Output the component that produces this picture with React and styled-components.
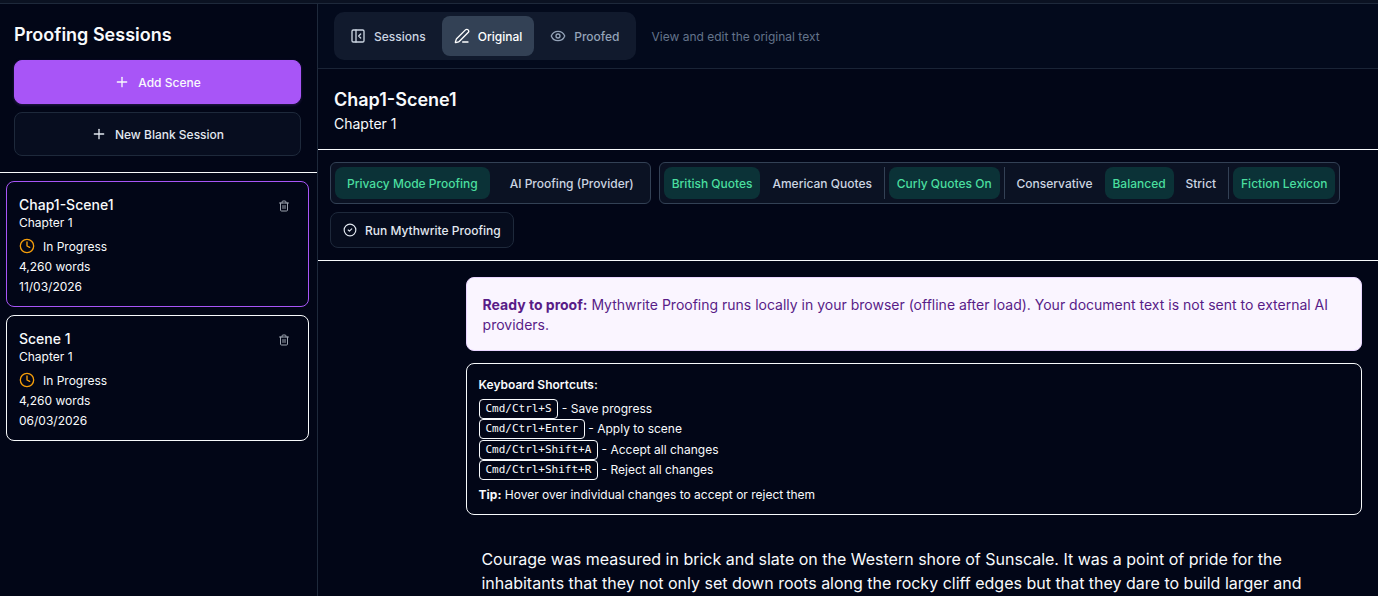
import React, { useState } from 'react';
import styled, { createGlobalStyle, css } from 'styled-components';
import { CircleCheck, Clock, Eye, PanelLeftClose, PenLine, Plus, Trash2 } from 'lucide-react';

const GlobalStyle = createGlobalStyle`
  * { box-sizing: border-box; }
  body {
    margin: 0;
    background: #020617;
    color: #f8fafc;
    font-family: Inter, 'Liberation Sans', sans-serif;
    font-size: 12px;
  }
  button { font-family: inherit; cursor: pointer; }
  h1, h2, h3, p { margin: 0; }
`;

const Page = styled.div`
  display: flex;
  flex-direction: column;
  height: 596px;
  overflow: hidden;
`;

const TopStrip = styled.div`
  flex: none;
  height: 4px;
  background: #0b1222;
  border-bottom: 1px solid #1e293b;
`;

const Body = styled.div`
  display: flex;
  flex: 1;
  min-height: 0;
`;

const Sidebar = styled.aside`
  flex: none;
  width: 318px;
  border-right: 1px solid #1e293b;
`;

const SidebarHead = styled.div`
  display: flex;
  flex-direction: column;
  gap: 8px;
  height: 169px;
  padding: 17px 16px 16px 14px;
  border-bottom: 1px solid #f8fafc;
`;

const SidebarTitle = styled.h2`
  height: 31px;
  font-size: 18px;
  font-weight: 600;
  line-height: 28px;
`;

const SideButton = styled.button`
  display: flex;
  flex: none;
  align-items: center;
  justify-content: center;
  gap: 8px;
  height: 44px;
  padding-top: 2px;
  border: 1px solid #1e293b;
  border-radius: 8px;
  background: #070d1f;
  color: #e2e8f0;
  font-size: 12px;
  font-weight: 500;

  svg { margin-top: -2px; }

  ${({ $primary }) =>
    $primary &&
    css`
      border-color: #a855f7;
      background: #a855f7;
      color: #f8fafc;
      box-shadow: 0 1px 3px rgba(168, 85, 247, 0.25);
    `}
`;

const SessionList = styled.div`
  display: flex;
  flex-direction: column;
  gap: 8px;
  padding: 8px 8px 8px 6px;
`;

const Card = styled.article`
  display: flex;
  justify-content: space-between;
  height: 126px;
  padding: 13px 18px 11px 12px;
  border: 1px solid ${({ $active }) => ($active ? '#a855f7' : '#f8fafc')};
  border-radius: 8px;
`;

const CardTitle = styled.h3`
  font-size: 14px;
  font-weight: 500;
  line-height: 20px;
`;

const CardLine = styled.p`
  display: flex;
  align-items: center;
  gap: 8px;
  font-size: 12px;
  line-height: ${({ $tight }) => ($tight ? '16px' : '20px')};
  margin-bottom: ${({ $tight }) => ($tight ? '6px' : '0')};

  svg { margin-top: -2px; }
`;

const TrashButton = styled.button`
  display: flex;
  align-self: flex-start;
  margin-top: 5px;
  padding: 0;
  border: 0;
  background: none;
  color: #9ca3af;
`;

const Main = styled.main`
  display: flex;
  flex: 1;
  flex-direction: column;
  min-width: 0;
`;

const Toolbar = styled.div`
  display: flex;
  flex: none;
  align-items: center;
  gap: 16px;
  height: 65px;
  padding: 0 16px;
  border-bottom: 1px solid #1a2436;
  background: #030a1c;
`;

const Tabs = styled.div`
  display: flex;
  gap: 4px;
  padding: 4px;
  border-radius: 10px;
  background: #111a2d;
`;

const Tab = styled.button`
  display: flex;
  align-items: center;
  gap: 8px;
  height: 40px;
  padding: 0 12px;
  border: 0;
  border-radius: 8px;
  background: ${({ $active }) => ($active ? '#334155' : 'transparent')};
  color: ${({ $active, $muted }) => ($active ? '#ffffff' : $muted ? '#94a3b8' : '#cbd5e1')};
  font-size: 12px;
  font-weight: 500;
`;

const Hint = styled.span`
  padding-top: 1px;
  color: #64748b;
  font-size: 12px;
`;

const SceneHead = styled.header`
  flex: none;
  height: 81px;
  padding: 17px 16px;
  border-bottom: 1px solid #f8fafc;
`;

const SceneTitle = styled.h1`
  font-size: 18px;
  font-weight: 600;
  line-height: 28px;
`;

const SceneChapter = styled.p`
  font-size: 14px;
  line-height: 20px;
`;

const Options = styled.div`
  display: flex;
  flex: none;
  flex-wrap: wrap;
  align-content: flex-start;
  gap: 8px;
  height: 111px;
  padding: 12px;
  border-bottom: 1px solid #f8fafc;
`;

const OptionGroup = styled.div`
  display: flex;
  gap: ${({ $loose }) => ($loose ? '8px' : '4px')};
  height: 42px;
  padding: 4px;
  border: 1px solid #334155;
  border-radius: 6px;
  background: #0b1223;
`;

const Option = styled.button`
  padding: 0 ${({ $wide }) => ($wide ? '12px' : '7.95px')};
  border: 0;
  border-radius: 8px;
  background: ${({ $on }) => ($on ? '#0b3237' : 'transparent')};
  color: ${({ $on }) => ($on ? '#4ade9f' : '#cbd5e1')};
  font-size: 12px;
  font-weight: 500;
  white-space: nowrap;
`;

const Divider = styled.span`
  width: 1px;
  background: #334155;
`;

const RunButton = styled.button`
  display: flex;
  align-items: center;
  gap: 8px;
  height: 36px;
  padding: 0 12px;
  border: 1px solid #1e293b;
  border-radius: 8px;
  background: #060c1d;
  color: #e2e8f0;
  font-size: 12px;
  font-weight: 500;
`;

const Content = styled.section`
  display: flex;
  flex: 1;
  flex-direction: column;
  gap: 12px;
  min-height: 0;
  padding: 16px 16px 0 147.6px;
`;

const Notice = styled.div`
  flex: none;
  height: 74px;
  padding: 17px 16px;
  border: 1px solid #e9d5ff;
  border-radius: 8px;
  background: #faf5ff;
  color: #581c87;
  font-size: 14px;
  line-height: 20px;
`;

const Shortcuts = styled.div`
  flex: none;
  height: 152px;
  padding: 13px 12px;
  border: 1px solid #f8fafc;
  border-radius: 8px;
  font-size: 12px;
  line-height: 16px;
`;

const ShortcutsTitle = styled.p`
  margin-bottom: 5.6px;
  font-weight: 600;
`;

const Shortcut = styled.div`
  display: flex;
  align-items: center;
  gap: 3.4px;
  height: 20.4px;
`;

const Kbd = styled.kbd`
  height: 20px;
  padding: 0 5.8px;
  border: 1px solid #f8fafc;
  border-radius: 4px;
  font-family: 'DejaVu Sans Mono', monospace;
  font-size: 11px;
  line-height: 18px;
`;

const Tip = styled.p`
  margin-top: 6.4px;
`;

const Prose = styled.p`
  flex: none;
  width: 864px;
  padding: 20px 16px 0 15.8px;
  font-size: 16px;
  line-height: 24px;
`;

const sessions = [
  { id: 1, title: 'Chap1-Scene1', chapter: 'Chapter 1', words: '4,260 words', date: '11/03/2026' },
  { id: 2, title: 'Scene 1', chapter: 'Chapter 1', words: '4,260 words', date: '06/03/2026' },
];

const shortcuts = [
  ['Cmd/Ctrl+S', 'Save progress'],
  ['Cmd/Ctrl+Enter', 'Apply to scene'],
  ['Cmd/Ctrl+Shift+A', 'Accept all changes'],
  ['Cmd/Ctrl+Shift+R', 'Reject all changes'],
];

function SessionCard({ session, active, onSelect }) {
  return (
    <Card $active={active} onClick={onSelect}>
      <div>
        <CardTitle>{session.title}</CardTitle>
        <CardLine $tight>{session.chapter}</CardLine>
        <CardLine>
          <Clock size={16} color='#f59e0b' />
          In Progress
        </CardLine>
        <CardLine>{session.words}</CardLine>
        <CardLine>{session.date}</CardLine>
      </div>
      <TrashButton aria-label='Delete session'>
        <Trash2 size={12} />
      </TrashButton>
    </Card>
  );
}

function App() {
  const [selected, setSelected] = useState(1);
  const [tab, setTab] = useState('original');

  return (
    <Page>
      <GlobalStyle />
      <TopStrip />
      <Body>
        <Sidebar>
          <SidebarHead>
            <SidebarTitle>Proofing Sessions</SidebarTitle>
            <SideButton $primary>
              <Plus size={16} />
              Add Scene
            </SideButton>
            <SideButton>
              <Plus size={16} />
              New Blank Session
            </SideButton>
          </SidebarHead>
          <SessionList>
            {sessions.map(session => (
              <SessionCard
                key={session.id}
                session={session}
                active={session.id === selected}
                onSelect={() => setSelected(session.id)}
              />
            ))}
          </SessionList>
        </Sidebar>
        <Main>
          <Toolbar>
            <Tabs>
              <Tab>
                <PanelLeftClose size={16} />
                Sessions
              </Tab>
              <Tab $active={tab === 'original'} onClick={() => setTab('original')}>
                <PenLine size={16} />
                Original
              </Tab>
              <Tab $muted $active={tab === 'proofed'} onClick={() => setTab('proofed')}>
                <Eye size={16} />
                Proofed
              </Tab>
            </Tabs>
            <Hint>View and edit the original text</Hint>
          </Toolbar>
          <SceneHead>
            <SceneTitle>Chap1-Scene1</SceneTitle>
            <SceneChapter>Chapter 1</SceneChapter>
          </SceneHead>
          <Options>
            <OptionGroup $loose>
              <Option $wide $on>Privacy Mode Proofing</Option>
              <Option $wide>AI Proofing (Provider)</Option>
            </OptionGroup>
            <OptionGroup>
              <Option $on>British Quotes</Option>
              <Option>American Quotes</Option>
              <Divider />
              <Option $on>Curly Quotes On</Option>
              <Divider />
              <Option>Conservative</Option>
              <Option $on>Balanced</Option>
              <Option>Strict</Option>
              <Divider />
              <Option $on>Fiction Lexicon</Option>
            </OptionGroup>
            <RunButton>
              <CircleCheck size={14} />
              Run Mythwrite Proofing
            </RunButton>
          </Options>
          <Content>
            <Notice>
              <strong>Ready to proof:</strong> Mythwrite Proofing runs locally in your browser (offline after
              load). Your document text is not sent to external AI providers.
            </Notice>
            <Shortcuts>
              <ShortcutsTitle>Keyboard Shortcuts:</ShortcutsTitle>
              {shortcuts.map(([keys, label]) => (
                <Shortcut key={keys}>
                  <Kbd>{keys}</Kbd>
                  <span>- {label}</span>
                </Shortcut>
              ))}
              <Tip>
                <strong>Tip:</strong> Hover over individual changes to accept or reject them
              </Tip>
            </Shortcuts>
            <Prose>
              Courage was measured in brick and slate on the Western shore of Sunscale. It was a point of pride
              for the inhabitants that they not only set down roots along the rocky cliff edges but that they
              dare to build larger and
            </Prose>
          </Content>
        </Main>
      </Body>
    </Page>
  );
}

export default App;
